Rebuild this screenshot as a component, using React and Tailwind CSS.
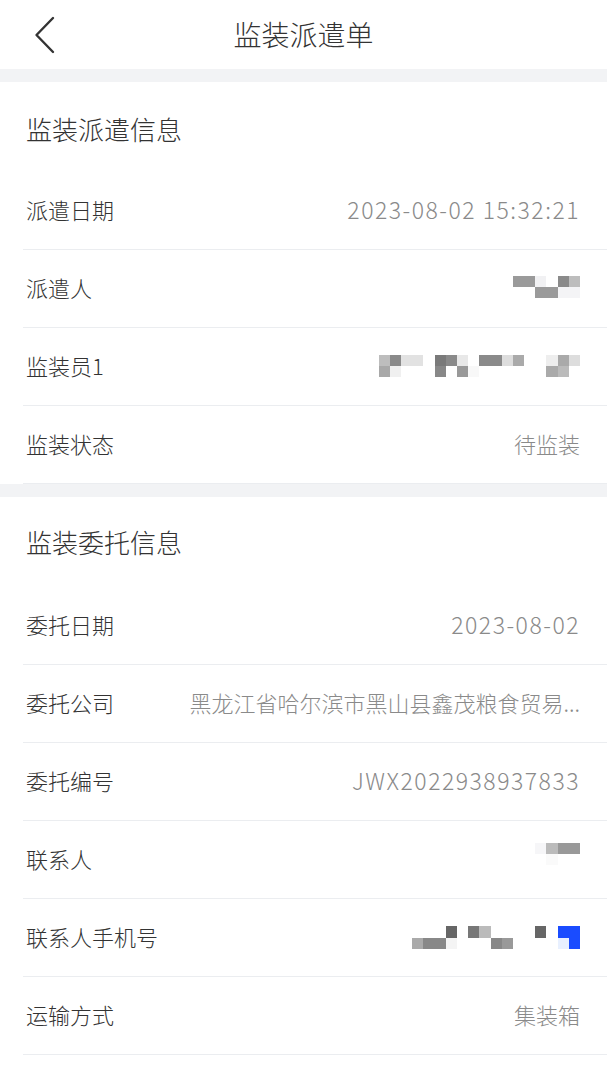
import React from "react";

const FONT = { fontFamily: '"Noto Sans CJK SC", "Liberation Sans", sans-serif' };

function Mosaic({ rows, cell = 11.2, dy = 0 }) {
  return (
    <div className="flex flex-col" style={{ marginTop: dy }}>
      {rows.map((r, i) => (
        <div key={i} className="flex">
          {r.map((c, j) => (
            <div
              key={j}
              style={{ width: cell, height: cell, background: c || "transparent" }}
            />
          ))}
        </div>
      ))}
    </div>
  );
}

function Row({ label, children }) {
  return (
    <div className="ml-[23px] h-[78px] border-b border-[#ebedf0] flex items-center pl-[3px] pr-[27px] pb-[3px]">
      <div className="shrink-0 text-[22px] text-[#333333] leading-[30px] font-light">{label}</div>
      <div className="flex-1 min-w-0 flex justify-end ml-[50px]">{children}</div>
    </div>
  );
}

function Val({ children, digits }) {
  return (
    <div
      className={
        "leading-[30px] text-[#8a8a8a] font-light " +
        (digits
          ? "text-[23px] tracking-[1.5px] whitespace-nowrap"
          : "text-[22px] truncate")
      }
    >
      {children}
    </div>
  );
}

function Section({ title, children, pt }) {
  return (
    <div className="bg-white">
      <div
        className="h-[90px] flex items-center pl-[26px] text-[26px] text-[#333333] leading-[34px] font-light"
        style={{ paddingTop: pt }}
      >
        {title}
      </div>
      {children}
    </div>
  );
}

const _ = null;

export default function App() {
  return (
    <div className="w-[607px] h-[1080px] bg-white overflow-hidden" style={FONT}>
      <div className="h-[69px] grid grid-cols-[1fr_auto_1fr] items-center bg-white">
        <div className="pl-[34px] flex items-center">
          <svg width="22" height="38" viewBox="0 0 22 38" fill="none">
            <path
              d="M19 2 L2.5 19 L19 36"
              stroke="#333333"
              strokeWidth="2.4"
              strokeLinecap="round"
              strokeLinejoin="round"
            />
          </svg>
        </div>
        <div className="text-[28px] text-[#333333] leading-[36px] font-light pb-[2px]">监装派遣单</div>
        <div />
      </div>
      <div className="h-[13px] bg-[#f2f3f5]" />

      <Section title="监装派遣信息" pt={4}>
        <Row label="派遣日期">
          <Val digits>2023-08-02 15:32:21</Val>
        </Row>
        <Row label="派遣人">
          <Mosaic
            dy={0}
            rows={[
              ["#9a9a9a", "#9a9a9a", "#f1f1f3", _, "#8a8a8a", "#bdbdbd"],
              [_, _, "#9a9a9a", "#9a9a9a", "#f4f4f6", "#f4f4f6"],
            ]}
          />
        </Row>
        <Row label="监装员1">
          <Mosaic
            dy={2}
            rows={[
              ["#bdbdbd", "#8a8a8a", "#e2e2e2", "#e2e2e2", _, "#7a7a7a", "#8a8a8a", "#e8e8e8", _, "#8a8a8a", "#8a8a8a", "#dddddd", "#aaaaaa", _, _, "#eeeeee", "#aaaaaa", "#dddddd"],
              ["#a8a8a8", "#f0f0f0", _, _, _, "#888888", _, "#999999", "#f8f8f8", _, _, _, _, _, _, "#aaaaaa", "#bbbbbb", _],
            ]}
          />
        </Row>
        <Row label="监装状态">
          <Val>待监装</Val>
        </Row>
      </Section>

      <div className="h-[13px] bg-[#f2f3f5]" />

      <Section title="监装委托信息" pt={0}>
        <Row label="委托日期">
          <Val digits>2023-08-02</Val>
        </Row>
        <Row label="委托公司">
          <Val>黑龙江省哈尔滨市黑山县鑫茂粮食贸易...</Val>
        </Row>
        <Row label="委托编号">
          <Val digits>JWX2022938937833</Val>
        </Row>
        <Row label="联系人">
          <Mosaic
            dy={-8}
            rows={[
              ["#f6f6f8", "#bbbbbb", "#999999", "#999999"],
              [_, "#fafafa", _, _],
            ]}
          />
        </Row>
        <Row label="联系人手机号">
          <Mosaic
            dy={3}
            rows={[
              [_, _, _, "#666666", _, "#777777", "#bbbbbb", _, _, _, _, "#666666", _, "#1a4cff", "#1a4cff"],
              ["#aaaaaa", "#888888", "#888888", "#f4f4f4", _, _, _, "#888888", "#999999", _, _, _, _, "#e8f0ff", "#1a4cff"],
            ]}
          />
        </Row>
        <Row label="运输方式">
          <Val>集装箱</Val>
        </Row>
      </Section>
    </div>
  );
}
